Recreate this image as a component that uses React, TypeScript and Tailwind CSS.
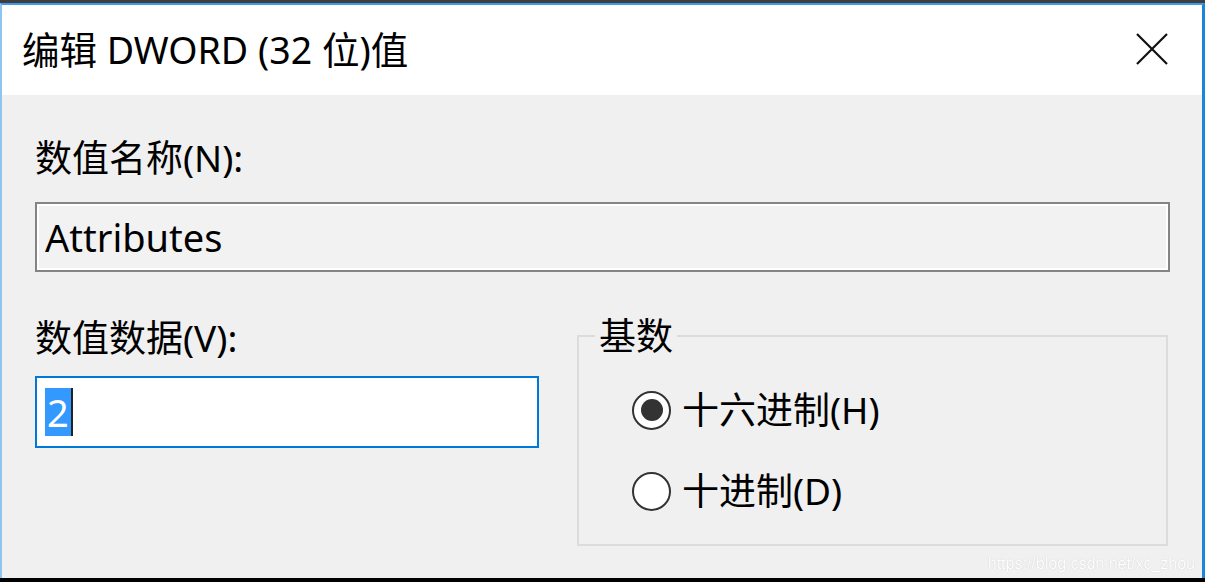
import React from "react";

const font = "font-['Noto_Sans','Noto_Sans_CJK_SC',sans-serif]";

function Radio({ checked, label }: { checked: boolean; label: string }) {
  return (
    <div className="flex h-[48px] items-center">
      <span className="flex h-[39px] w-[39px] items-center justify-center rounded-full border-[2.5px] border-[#333333] bg-white">
        {checked && <span className="h-[22px] w-[22px] rounded-full bg-[#333333]" />}
      </span>
      <span className="ml-[11px] text-[37px] leading-[40px] text-black">{label}</span>
    </div>
  );
}

export default function App() {
  return (
    <div className={`relative h-[582px] w-[1205px] overflow-hidden border-t-[3px] border-b-[4px] border-t-[#3f3f3f] border-b-black bg-black ${font}`}>
      <div className="flex h-full flex-col border-t-2 border-r-[3px] border-l-2 border-t-[#3d9be9] border-r-[#1a86d9] border-l-[#8cc4f2] bg-[#f0f0f0]">
        {/* title bar */}
        <div className="flex h-[90px] shrink-0 items-center justify-between bg-white pr-[34px] pl-[20px]">
          <h1 className="text-[37.5px] leading-[44px] font-normal text-black">编辑 DWORD (32 位)值</h1>
          <svg width="32" height="32" viewBox="0 0 32 32" className="-mt-[2px]">
            <path d="M1 1 L31 31 M31 1 L1 31" stroke="#111" strokeWidth="2.2" fill="none" />
          </svg>
        </div>

        {/* body */}
        <div className="flex flex-col pt-[43px] pl-[33px]">
          <label className="text-[37px] leading-[40px] text-black">数值名称(N):</label>
          <div className="mt-[24px] flex h-[70px] w-[1135px] items-center border-2 border-[#848484] bg-[#f2f2f2] pl-[8px] shadow-[inset_0_0_0_2px_#ffffff]">
            <span className="text-[38px] leading-[40px] text-black">Attributes</span>
          </div>

          <div className="mt-[44px] grid grid-cols-[504px_591px] gap-x-[38px]">
            <div className="flex flex-col pt-[2px]">
              <label className="text-[37px] leading-[40px] text-black">数值数据(V):</label>
              <div className="mt-[18px] flex h-[72px] w-[504px] items-center border-2 border-[#0078d7] bg-white pl-[8px]">
                <span className="flex h-[48px] items-center bg-[#3399ff] px-[2px] text-[38px] leading-[40px] text-white">2</span>
                <span className="h-[48px] w-[2px] bg-[#222]" />
              </div>
            </div>

            <fieldset className="m-0 h-[230px] border-2 border-[#dcdcdc] px-0 pt-0 pb-0 pl-[53px]">
              <legend className="-ml-[37px] px-[4px] text-[37px] leading-[40px] text-black">基数</legend>
              <div className="mt-[30px] flex flex-col gap-[33px]">
                <Radio checked label="十六进制(H)" />
                <Radio checked={false} label="十进制(D)" />
              </div>
            </fieldset>
          </div>
        </div>
      </div>

      {/* watermark */}
      <span className="pointer-events-none absolute right-[10px] bottom-[4px] font-['Liberation_Sans',Arial,sans-serif] text-[16px] leading-[20px] text-white [text-shadow:0_0_1px_rgba(0,0,0,0.2)]">
        https://blog.csdn.net/xc_zhou
      </span>
    </div>
  );
}
